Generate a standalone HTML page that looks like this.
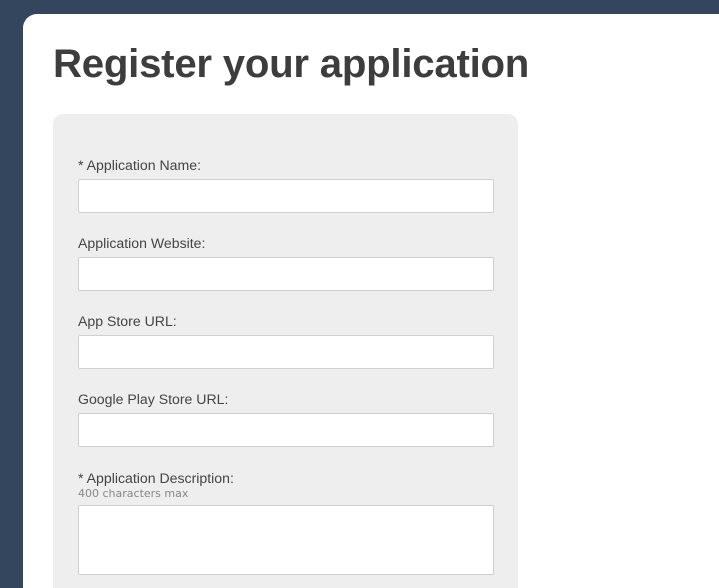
<!DOCTYPE html>
<html><head><style>
html,body{margin:0;width:719px;height:588px;overflow:hidden}
body{background:#34465e;font-family:"Liberation Sans",sans-serif;position:relative}
.card{position:absolute;left:23px;top:14px;width:696px;height:574px;background:#fff;border-radius:14px 0 0 0}
h1{position:absolute;left:53px;top:39px;margin:0;font-size:40.2px;font-weight:bold;color:#3d3d3d;letter-spacing:-0.25px;line-height:50px}
.box{position:absolute;left:53px;top:114px;width:465px;height:474px;background:#eeeeee;border-radius:10px 10px 0 0}
.l{position:absolute;left:78px;font-size:14.1px;color:#444;line-height:16px}
.i{position:absolute;left:78px;width:414px;height:32px;background:#fff;border:1px solid #cfcfd4;border-radius:2px}
.s{position:absolute;left:78px;top:488px;font-size:11px;color:#888;font-family:"DejaVu Sans",sans-serif;line-height:12px}
</style></head><body>
<div class="card"></div>
<h1>Register your application</h1>
<div class="box"></div>
<div class="l" style="top:157px">* Application Name:</div>
<div class="i" style="top:179px"></div>
<div class="l" style="top:235px">Application Website:</div>
<div class="i" style="top:257px"></div>
<div class="l" style="top:313px">App Store URL:</div>
<div class="i" style="top:335px"></div>
<div class="l" style="top:391px">Google Play Store URL:</div>
<div class="i" style="top:413px"></div>
<div class="l" style="top:470px">* Application Description:</div>
<div class="s">400 characters max</div>
<div class="i" style="top:505px;height:68px"></div>
</body></html>
